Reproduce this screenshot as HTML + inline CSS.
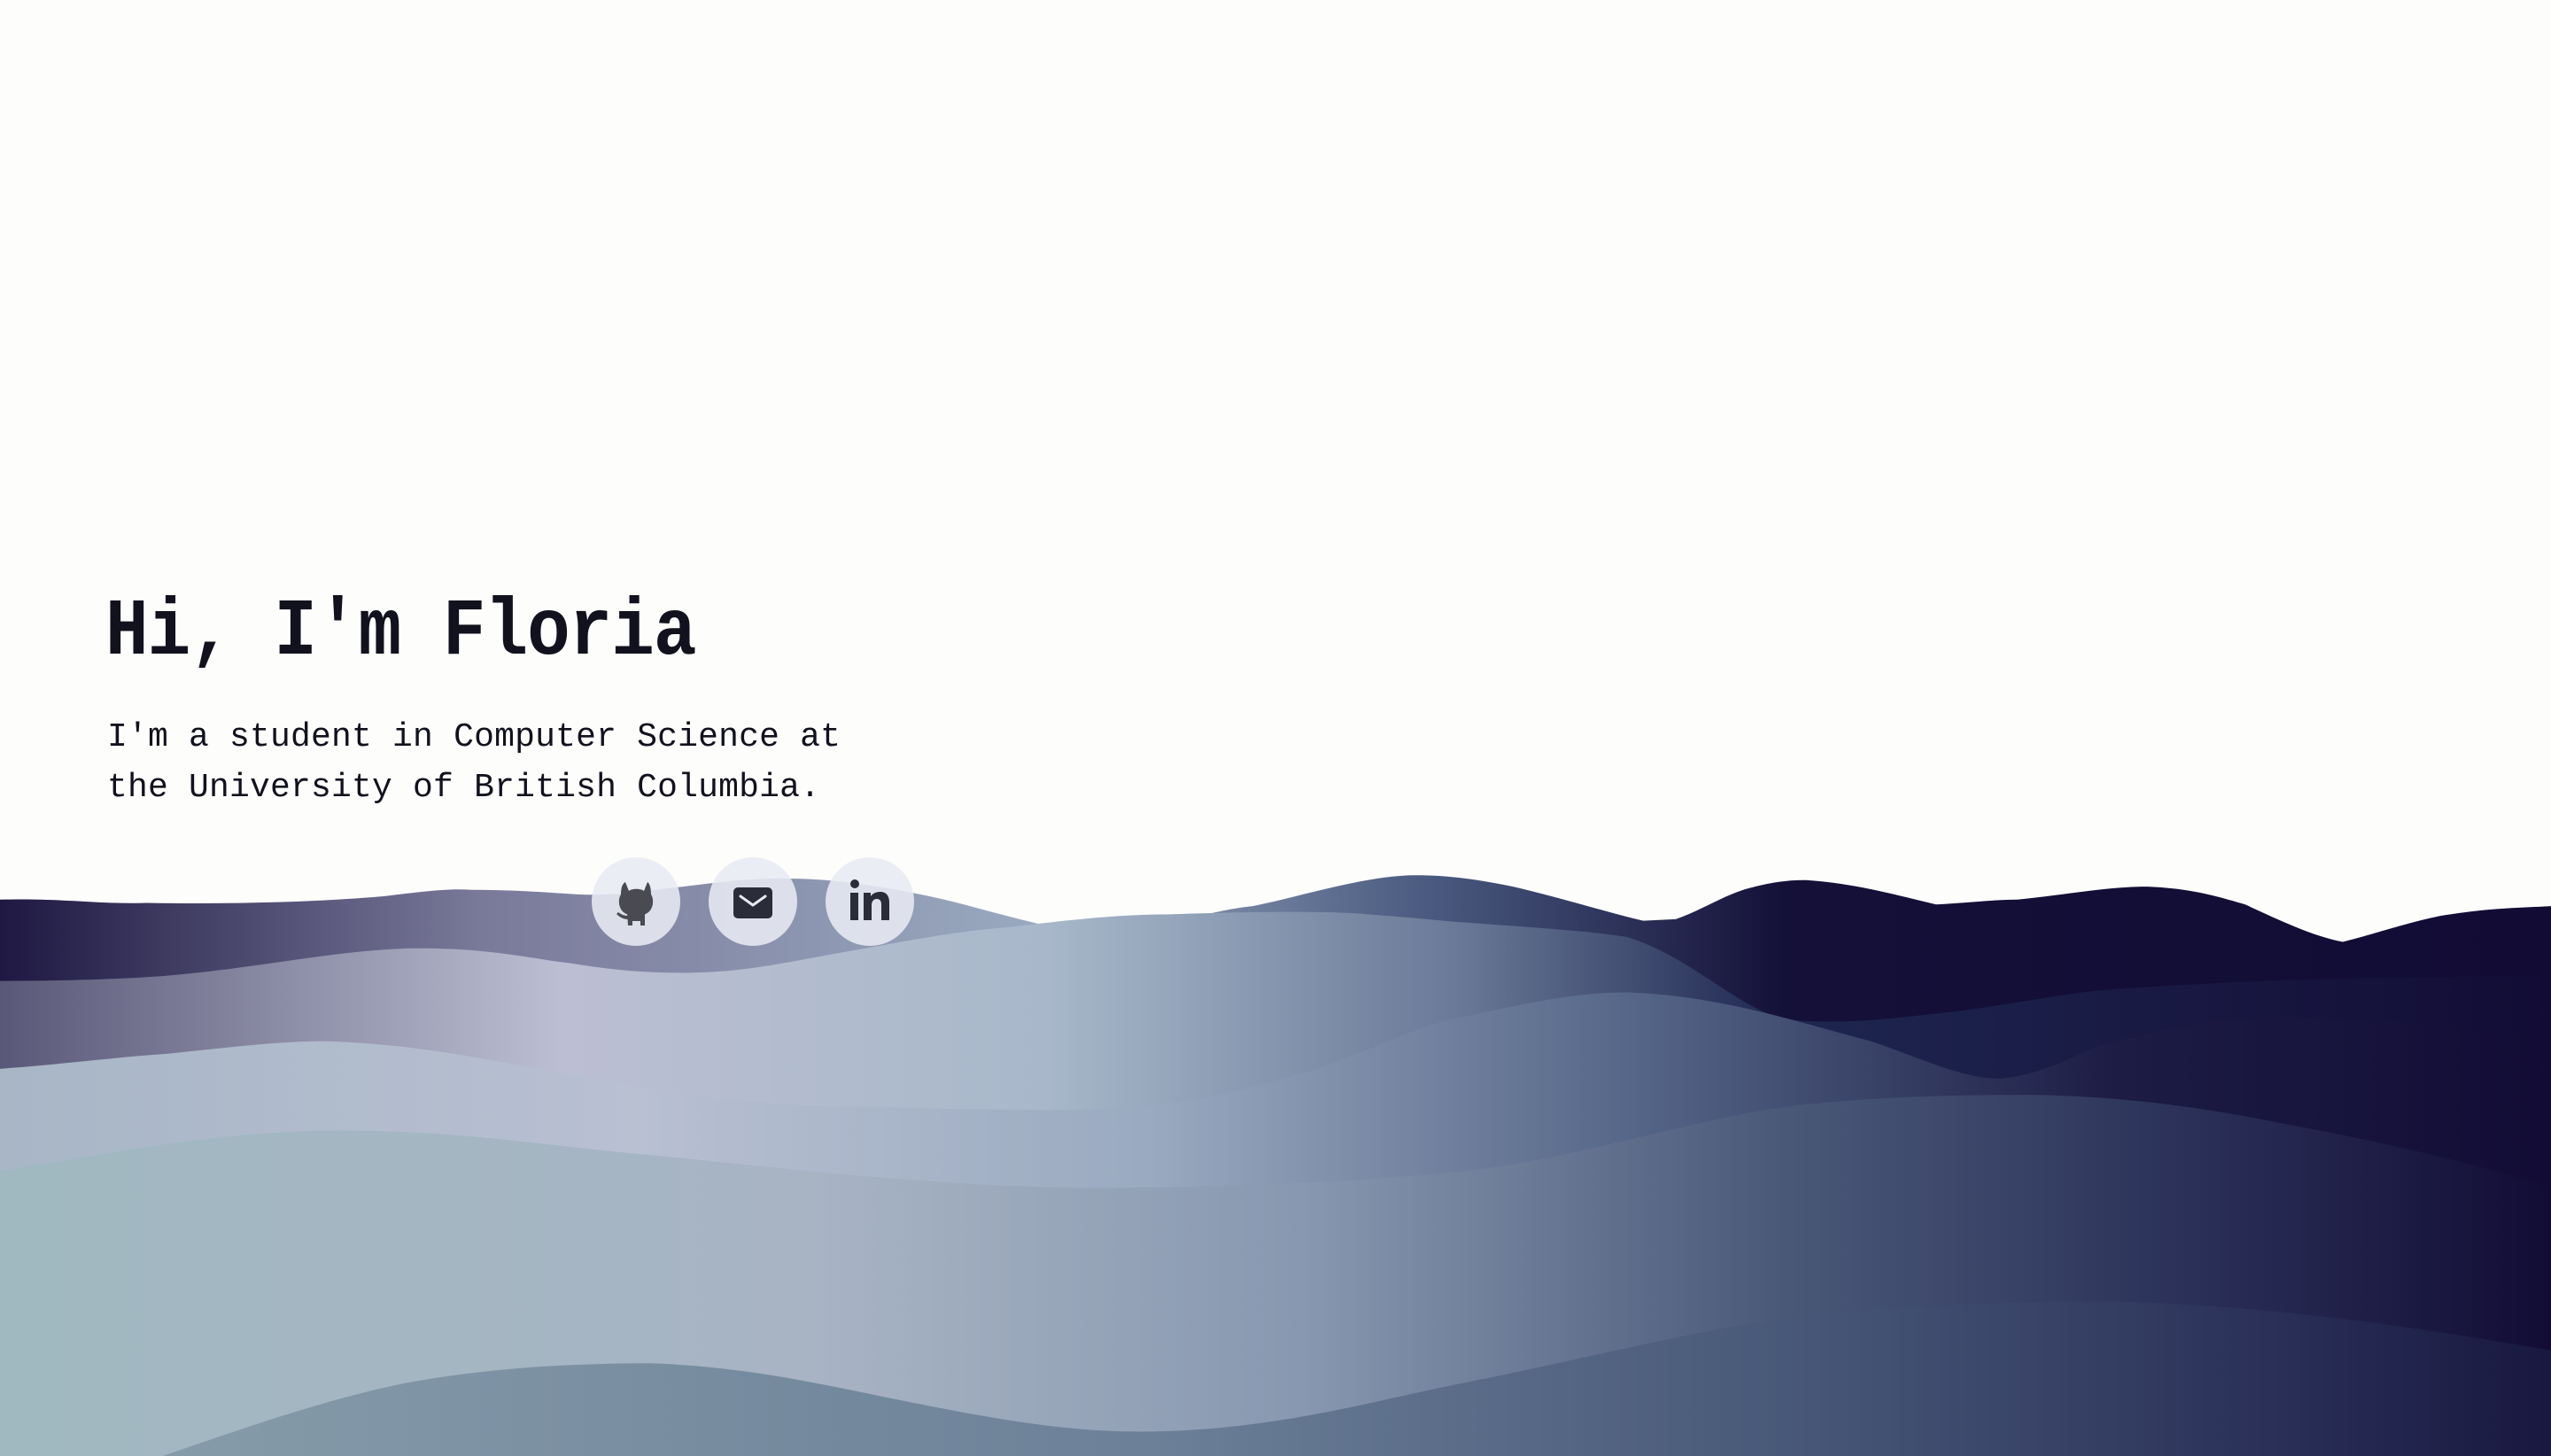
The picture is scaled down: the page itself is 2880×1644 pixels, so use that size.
<!DOCTYPE html>
<html><head><meta charset="utf-8"><style>
html,body{margin:0;padding:0;background:#fdfdfc;width:2880px;height:1644px;overflow:hidden;position:relative;font-family:"Liberation Mono",monospace;color:#12121e}
svg.w{position:absolute;left:0;top:0}
h1{position:absolute;left:119px;top:654px;margin:0;font-size:81px;font-weight:bold;line-height:110px;letter-spacing:-1px;transform:scaleY(1.12);transform-origin:left top}
p{position:absolute;left:121px;top:804px;margin:0;font-size:38px;line-height:57px;letter-spacing:0.2px}
.c{position:absolute;width:100px;height:100px;border-radius:50%;background:rgba(232,234,242,0.88);top:968px}
.c svg{position:absolute;left:0;top:0}
</style></head><body>
<svg class="w" width="2880" height="1644" viewBox="0 0 1568 895" preserveAspectRatio="none">
<defs>
<linearGradient id="g1" x1="0" x2="1568" y1="0" y2="0" gradientUnits="userSpaceOnUse">
<stop offset="0" stop-color="#1e1842"/><stop offset="0.19" stop-color="#7a7a9a"/><stop offset="0.41" stop-color="#9aaac0"/><stop offset="0.56" stop-color="#4a5a80"/><stop offset="0.7" stop-color="#141038"/><stop offset="1" stop-color="#120c35"/></linearGradient>
<linearGradient id="g2" x1="0" x2="1568" y1="0" y2="0" gradientUnits="userSpaceOnUse">
<stop offset="0" stop-color="#5a5878"/><stop offset="0.22" stop-color="#bcbfd3"/><stop offset="0.41" stop-color="#a8b8ca"/><stop offset="0.57" stop-color="#6a7a98"/><stop offset="0.7" stop-color="#1e2650"/><stop offset="1" stop-color="#120c35"/></linearGradient>
<linearGradient id="g3" x1="0" x2="1568" y1="0" y2="0" gradientUnits="userSpaceOnUse">
<stop offset="0" stop-color="#a8b6c6"/><stop offset="0.25" stop-color="#b8c0d2"/><stop offset="0.45" stop-color="#9aaac0"/><stop offset="0.64" stop-color="#556688"/><stop offset="0.83" stop-color="#1c1c45"/><stop offset="1" stop-color="#120c35"/></linearGradient>
<linearGradient id="g4" x1="0" x2="1568" y1="0" y2="0" gradientUnits="userSpaceOnUse">
<stop offset="0" stop-color="#a0b8c0"/><stop offset="0.32" stop-color="#a8b4c4"/><stop offset="0.51" stop-color="#8898b0"/><stop offset="0.7" stop-color="#4a5878"/><stop offset="0.86" stop-color="#2a3058"/><stop offset="1" stop-color="#120c35"/></linearGradient>
<linearGradient id="g5" x1="0" x2="1568" y1="0" y2="0" gradientUnits="userSpaceOnUse">
<stop offset="0" stop-color="#8aa0ac"/><stop offset="0.45" stop-color="#6c8098"/><stop offset="0.7" stop-color="#485878"/><stop offset="0.89" stop-color="#2a3058"/><stop offset="1" stop-color="#181840"/></linearGradient>
</defs>
<path fill="url(#g1)" d="M0,553 C40,552 60,556 90,555 C150,556 200,554 235,551 C260,548 275,546 290,547 C320,547 340,549 360,550 C390,550 400,547 420,545 C445,542 460,540 480,540 C505,540 520,542 540,545 C570,550 585,554 600,558 C630,566 660,574 685,577 C710,572 740,560 770,557 C800,551 840,538 870,538 C895,538 915,542 930,545 C960,552 985,560 1010,566 L1030,565 C1045,560 1060,550 1075,546 C1090,542 1100,541 1110,541 C1140,543 1165,550 1190,556 C1210,555 1225,553 1240,553 C1270,550 1295,545 1320,545 C1345,546 1360,550 1380,556 C1400,565 1420,575 1440,579 C1460,574 1480,567 1500,563 C1530,558 1550,558 1568,557 L1568,895 L0,895 Z"/>
<path fill="url(#g2)" d="M0,603 C40,603 70,602 100,600 C160,595 200,585 250,583 C300,582 330,590 350,592 C380,597 400,598 420,598 C460,598 490,590 520,585 C560,578 590,572 620,570 C660,565 690,562 720,562 C780,560 820,560 840,562 C870,564 885,566 900,567 C940,570 975,572 1000,576 C1040,588 1070,622 1100,627 C1140,630 1170,625 1200,622 C1240,617 1270,610 1300,608 C1400,601 1500,600 1568,600 L1568,895 L0,895 Z"/>
<path fill="url(#g3)" d="M0,657 C40,654 70,650 100,648 C140,644 170,640 200,640 C260,642 300,652 350,660 C410,672 460,680 520,680 C600,682 660,684 700,680 C750,675 770,668 800,660 C840,648 870,630 900,625 C940,616 970,610 1000,610 C1060,612 1110,630 1150,640 C1180,650 1205,663 1230,663 C1260,660 1280,645 1300,640 C1340,630 1370,625 1400,625 C1460,625 1520,632 1568,640 L1568,895 L0,895 Z"/>
<path fill="url(#g4)" d="M0,720 C60,710 130,696 200,695 C280,694 340,705 400,710 C500,720 600,732 700,730 C780,729 840,726 900,720 C970,712 1040,688 1100,680 C1150,674 1200,673 1250,673 C1310,674 1360,682 1400,690 C1470,703 1520,715 1568,730 L1568,895 L0,895 Z"/>
<path fill="url(#g5)" d="M100,895 C150,878 200,860 250,850 C300,841 350,838 400,838 C460,840 510,852 550,860 C600,870 650,880 700,880 C780,880 840,862 900,850 C980,834 1040,818 1100,810 C1170,802 1240,800 1300,800 C1400,803 1480,815 1568,830 L1568,895 Z"/>
</svg>
<h1>Hi, I'm Floria</h1>
<p>I'm a student in Computer Science at<br>the University of British Columbia.</p>
<div class="c" style="left:668px">
<svg width="100" height="100" viewBox="0 0 100 100"><g fill="#4a4a52">
<path d="M38,28 L42,38 C45,35 56,35 59,38 L63,28 C66,30 67,36 67,42 C70,46 70,55 66,60 C62,65 56,66 50,66 C44,66 38,65 34,60 C30,55 30,46 33,42 C33,36 34,30 38,28 Z"/>
<path d="M40,62 L60,62 L60,77 L55,77 L55,72 L46,72 L46,77 L41,77 Z"/>
<path d="M41,70 C36,70 32,68 28,64 L30,62 C34,65 37,66 41,66 Z"/></g></svg></div>
<div class="c" style="left:800px">
<svg width="100" height="100" viewBox="0 0 100 100"><rect x="28" y="34" width="44" height="35" rx="5" fill="#2a2c3a"/><path d="M36,44 L50,54 L64,44" fill="none" stroke="#e8eaf2" stroke-width="3" stroke-linecap="round" stroke-linejoin="round"/></svg></div>
<div class="c" style="left:932px">
<svg width="100" height="100" viewBox="0 0 100 100"><g fill="#2a2c3a"><circle cx="33" cy="30" r="5"/><rect x="28" y="40" width="9" height="31"/><path d="M43,40 L51,40 L51,44 C54,40 58,39 62,39 C69,39 72,44 72,51 L72,71 L63,71 L63,53 C63,49 61,47 58,47 C54,47 52,50 52,54 L52,71 L43,71 Z"/></g></svg></div>
</body></html>
